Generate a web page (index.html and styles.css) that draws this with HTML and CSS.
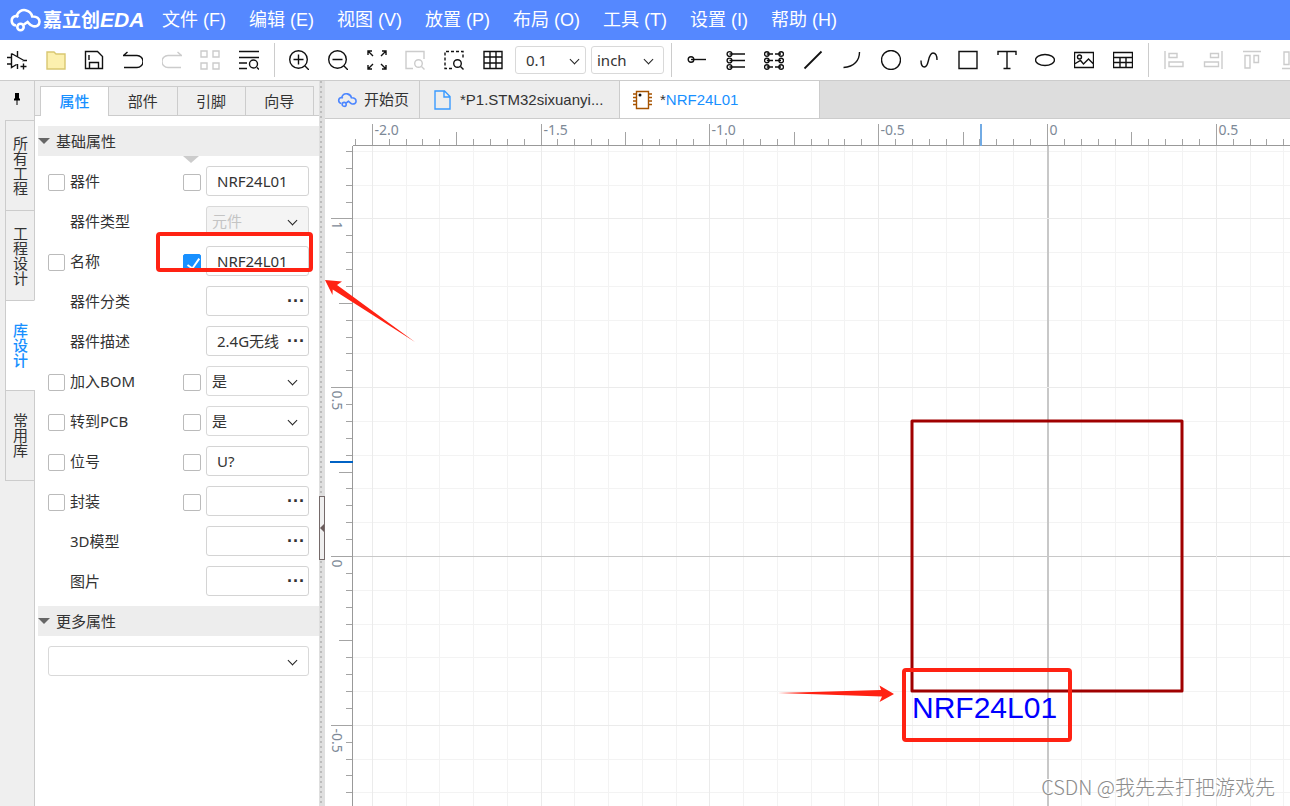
FILE: index.html
```html
<!DOCTYPE html>
<html lang="zh-CN">
<head>
<meta charset="utf-8">
<title>嘉立创EDA</title>
<link rel="stylesheet" href="styles.css">
</head>
<body>
<svg class="defs" aria-hidden="true">
  <symbol id="cloud" viewBox="0 0 32 24">
    <path d="M7 17.500a4.800 4.800 0 0 1-.3-9.500c1 0 2 .3 2.800.8M7.500 8C9 3.500 13 1.500 16.500 2.200c4 .8 6 3.300 6.700 6.300 4.500-.3 7.300 2 7.300 5.300 0 3.500-3 5-6.300 4.500-2.500-.4-4-2.500-5.700-4.300-1.500 1-2.500 1.800-3.700 2.800"/>
    <circle cx="11.500" cy="19" r="3.200"/>
  </symbol>
</svg>
<div class="app">
  <header class="menubar">
    <div class="logo">
      <svg class="logo-mark" viewBox="0 0 32 24"><use href="#cloud"/></svg>
      <span class="logo-cn">嘉立创</span><span class="logo-en">EDA</span>
    </div>
    <nav class="menus">
      <button class="menu">文件 (F)</button>
      <button class="menu">编辑 (E)</button>
      <button class="menu">视图 (V)</button>
      <button class="menu">放置 (P)</button>
      <button class="menu">布局 (O)</button>
      <button class="menu">工具 (T)</button>
      <button class="menu">设置 (I)</button>
      <button class="menu">帮助 (H)</button>
    </nav>
  </header>

  <div class="toolbar">
    <div class="tools tools-file">
      <button class="tool" aria-label="新建符号"><svg viewBox="0 0 20 20"><path d="M4.500 3.500v14l5-3M4.500 3.500L17 10.500M0 7.500h4.500M0 14h4.500M15 10.500h5M10.500 1v5.500M10.500 14v5M13.500 16.500h6M16.500 13.500v6"/></svg></button>
      <button class="tool" aria-label="打开"><svg viewBox="0 0 20 20"><path class="folder" d="M1 2h7l2 2h9v15H1z"/></svg></button>
      <button class="tool" aria-label="保存"><svg viewBox="0 0 20 20"><path d="M1.500 1.500h12l5 5v12h-17zM5.500 18.500v-6h9v6M5 5v5"/></svg></button>
      <button class="tool" aria-label="撤销"><svg viewBox="0 0 20 20"><path d="M4.500 2L.5 5.500H14a5.500 5.500 0 0 1 0 12H1"/></svg></button>
      <button class="tool off" aria-label="重做" disabled><svg viewBox="0 0 20 20"><path d="M15.500 2l4 3.500H6a5.500 5.500 0 0 0 0 12h13"/></svg></button>
      <button class="tool off" aria-label="阵列" disabled><svg viewBox="0 0 20 20"><path d="M1 1h6v6H1zM13 1h6v6h-6zM1 13h6v6H1zM13 13h6v6h-6z"/></svg></button>
      <button class="tool" aria-label="查找"><svg viewBox="0 0 20 20"><path d="M0 1.500h20M0 7.500h20M0 13h8M0 18.500h8M18 17.500l2 2"/><circle cx="14.500" cy="14" r="4"/></svg></button>
    </div>
    <div class="tools tools-view">
      <button class="tool" aria-label="放大"><svg viewBox="0 0 20 20"><circle cx="9.500" cy="9.500" r="8.800"/><path d="M4.500 9.500h10M9.500 4.500v10M16 16l4 4"/></svg></button>
      <button class="tool" aria-label="缩小"><svg viewBox="0 0 20 20"><circle cx="9.500" cy="9.500" r="8.800"/><path d="M4.500 9.500h10M16 16l4 4"/></svg></button>
      <button class="tool" aria-label="适应全部"><svg viewBox="0 0 20 20"><path d="M1 5V1h4M1 1l5 5M15 1h4v4M19 1l-5 5M1 15v4h4M1 19l5-5M19 15v4h-4M19 19l-5-5"/></svg></button>
      <button class="tool off" aria-label="适应选中" disabled><svg viewBox="0 0 20 20"><path d="M8 18.500H1v-17h18V9M16.500 16.500l3 3"/><circle cx="13.500" cy="13.500" r="3.800"/></svg></button>
      <button class="tool" aria-label="区域缩放"><svg viewBox="0 0 20 20"><path stroke-dasharray="3 2" d="M8 18.500H1v-17h18V9"/><path d="M16.500 16.500l3 3"/><circle cx="13.500" cy="13.500" r="3.800"/></svg></button>
      <button class="tool" aria-label="网格"><svg viewBox="0 0 20 20"><path d="M1 1.500h18v17H1zM1 7h18M1 13h18M7 1.500v17M13 1.500v17"/></svg></button>
    </div>
    <span class="select select-size"><select aria-label="网格尺寸"><option>0.1</option></select></span>
    <span class="select select-unit"><select aria-label="单位"><option>inch</option></select></span>
    <div class="tools tools-draw">
      <button class="tool" aria-label="单引脚"><svg viewBox="0 0 20 20"><circle cx="4" cy="9.500" r="2.800"/><path d="M4 9.500H19"/></svg></button>
      <button class="tool" aria-label="引脚组"><svg viewBox="0 0 20 20"><circle cx="3.500" cy="4" r="2.400"/><circle cx="3.500" cy="10.500" r="2.400"/><circle cx="3.500" cy="17" r="2.400"/><path d="M3.500 4H19M3.500 10.500H19M3.500 17H19"/></svg></button>
      <button class="tool" aria-label="双列引脚"><svg viewBox="0 0 20 20"><circle cx="2.800" cy="4" r="2.300"/><circle cx="2.800" cy="10.500" r="2.300"/><circle cx="2.800" cy="17" r="2.300"/><circle cx="17.200" cy="4" r="2.300"/><circle cx="17.200" cy="10.500" r="2.300"/><circle cx="17.200" cy="17" r="2.300"/><path d="M2.800 4H9M11 4h6M2.800 10.500H9M11 10.500h6M2.800 17H9M11 17h6"/></svg></button>
      <button class="tool" aria-label="直线"><svg viewBox="0 0 20 20"><path stroke-width="1.800" d="M1.500 18.500l17-17"/></svg></button>
      <button class="tool" aria-label="圆弧"><svg viewBox="0 0 20 20"><path d="M17.500 2c0 8-5 15-16 15.500"/></svg></button>
      <button class="tool" aria-label="圆"><svg viewBox="0 0 20 20"><circle cx="10" cy="10" r="9.500"/></svg></button>
      <button class="tool" aria-label="贝塞尔"><svg viewBox="0 0 20 20"><path d="M2 10.500c0 4 1 6.500 3.500 6.500 5 0 3-14 8.500-14 2.500 0 4 3 4 7"/></svg></button>
      <button class="tool" aria-label="矩形"><svg viewBox="0 0 20 20"><path d="M1 1.500h18v17H1z"/></svg></button>
      <button class="tool" aria-label="文本"><svg viewBox="0 0 20 20"><path d="M1 5V1.500h18V5M10 1.500v17M6.500 18.500h7"/></svg></button>
      <button class="tool" aria-label="椭圆"><svg viewBox="0 0 20 20"><ellipse cx="10" cy="10" rx="9.500" ry="5.500"/></svg></button>
      <button class="tool" aria-label="图片"><svg viewBox="0 0 20 20"><path d="M.5 2.500h19v15H.5zM.5 14l6-3.500 3 3.500 5-5 5 5"/><circle cx="5.500" cy="7" r="2"/></svg></button>
      <button class="tool" aria-label="表格"><svg viewBox="0 0 20 20"><path d="M.5 2.500h19v15H.5zM.5 7.500h19M.5 12.500h19M7 7.500v10M13 7.500v10"/></svg></button>
    </div>
    <div class="tools tools-align">
      <button class="tool off" aria-label="左对齐" disabled><svg viewBox="0 0 20 20"><path d="M1 1v18M5 3.500h8v4H5zM5 12h14v4.500H5z"/></svg></button>
      <button class="tool off" aria-label="右对齐" disabled><svg viewBox="0 0 20 20"><path d="M19 1v18M7.500 3.500h8v4h-8zM1.500 12h14v4.500h-14z"/></svg></button>
      <button class="tool off" aria-label="顶对齐" disabled><svg viewBox="0 0 20 20"><path d="M1 1.500h18M3 5.500h5V18H3zM12 5.500h4.500v7H12z"/></svg></button>
      <button class="tool off" aria-label="底对齐" disabled><svg viewBox="0 0 20 20"><path d="M1 18.500h18M3 2h5v12.500H3zM12 7h4.500v7.500H12z"/></svg></button>
    </div>
  </div>

  <div class="body">
    <aside class="rail">
      <button class="pin" aria-label="固定"><svg viewBox="0 0 8 12"><path d="M2 0h4v5l1 1v1.500H4.500V12h-1V7.500H1V6l1-1z"/></svg></button>
      <button class="rail-tab">所有工程</button>
      <button class="rail-tab">工程设计</button>
      <button class="rail-tab active">库设计</button>
      <button class="rail-tab">常用库</button>
    </aside>

    <section class="panel">
      <div class="panel-tabs">
        <button class="panel-tab active">属性</button>
        <button class="panel-tab">部件</button>
        <button class="panel-tab">引脚</button>
        <button class="panel-tab">向导</button>
      </div>
      <h2 class="section">基础属性</h2>
      <div class="rows">
        <div class="row"><input class="check c1" type="checkbox" id="k1"><label class="name" for="k1">器件</label><input class="check c3" type="checkbox" aria-label="显示器件"><input class="field" aria-label="器件" value="NRF24L01"></div>
        <div class="row"><label class="name" for="f2">器件类型</label><span class="select field-select"><select id="f2" disabled><option>元件</option></select></span></div>
        <div class="row"><input class="check c1" type="checkbox" id="k3"><label class="name" for="k3">名称</label><input class="check c3" type="checkbox" aria-label="显示名称" checked><input class="field" aria-label="名称" value="NRF24L01"></div>
        <div class="row"><label class="name" for="f4">器件分类</label><span class="field combo"><input id="f4"><button class="more" aria-label="选择分类">···</button></span></div>
        <div class="row"><label class="name" for="f5">器件描述</label><span class="field combo"><input id="f5" value="2.4G无线"><button class="more" aria-label="编辑描述">···</button></span></div>
        <div class="row"><input class="check c1" type="checkbox" id="k6"><label class="name" for="k6">加入BOM</label><input class="check c3" type="checkbox" aria-label="显示加入BOM"><span class="select field-select"><select aria-label="加入BOM"><option>是</option></select></span></div>
        <div class="row"><input class="check c1" type="checkbox" id="k7"><label class="name" for="k7">转到PCB</label><input class="check c3" type="checkbox" aria-label="显示转到PCB"><span class="select field-select"><select aria-label="转到PCB"><option>是</option></select></span></div>
        <div class="row"><input class="check c1" type="checkbox" id="k8"><label class="name" for="k8">位号</label><input class="check c3" type="checkbox" aria-label="显示位号"><input class="field" aria-label="位号" value="U?"></div>
        <div class="row"><input class="check c1" type="checkbox" id="k9"><label class="name" for="k9">封装</label><input class="check c3" type="checkbox" aria-label="显示封装"><span class="field combo"><input aria-label="封装"><button class="more" aria-label="选择封装">···</button></span></div>
        <div class="row"><label class="name" for="f10">3D模型</label><span class="field combo"><input id="f10"><button class="more" aria-label="选择3D模型">···</button></span></div>
        <div class="row"><label class="name" for="f11">图片</label><span class="field combo"><input id="f11"><button class="more" aria-label="选择图片">···</button></span></div>
        <div class="mark"></div>
      </div>
      <h2 class="section">更多属性</h2>
      <div class="extra"><span class="select"><select aria-label="更多属性"><option></option></select></span></div>
    </section>

    <div class="splitter"><button class="handle" aria-label="收起面板"></button></div>

    <main class="main">
      <div class="doc-tabs">
        <button class="doc-tab home"><svg class="tab-cloud" viewBox="0 0 32 24"><use href="#cloud"/></svg><span>开始页</span></button>
        <button class="doc-tab file"><svg class="tab-page" viewBox="0 0 17 20"><path d="M1 1h9.500L16 6.500V19H1zM10 1v6h6"/></svg><span>*P1.STM32sixuanyi...</span></button>
        <button class="doc-tab file active"><svg class="tab-chip" viewBox="0 0 22 20"><path d="M4.500 1.500h12v17h-12zM1 4h3.500M1 7.500h3.500M1 11h3.500M1 14.500h3.500M16.500 4H20M16.500 7.500H20M16.500 11H20M16.500 14.500H20"/><circle cx="8" cy="5" r="1.500"/></svg><span>*<span class="doc-name">NRF24L01</span></span></button>
      </div>
      <div class="sheet">
        <svg class="canvas" id="canvas">
          <g id="grid"></g>
          <g id="ruler"></g>
          <path class="cursor-x" d="M656 5v22"/>
          <path class="cursor-y" d="M5 343h23"/>
          <g transform="translate(723 437)">
            <rect class="body-rect" x="-136" y="-135" width="270" height="270"/>
            <text class="part-name" x="-136" y="162">NRF24L01</text>
          </g>
          <rect class="note" x="579" y="551" width="166" height="70" rx="2"/>
          <path class="arrow" d="M453 574L556 571 554.500 566.500 569 575 554.500 583 557 577.500z"/>
          <path class="arrow" d="M0 161L17 162.500 12 166 90 223 7.700 170.500 7.500 176z"/>
        </svg>
        <div class="watermark">CSDN @我先去打把游戏先</div>
      </div>
    </main>
  </div>
</div>
<script src="canvas.js"></script>
</body>
</html>
```

FILE: styles.css
```css
* { box-sizing: border-box; }
body { margin: 0; background: #fff; color: #333; font: 15px/20px "Noto Sans", "Noto Sans CJK SC", sans-serif; }
button, input, select { font: inherit; color: inherit; margin: 0; padding: 0; border: 0; background: none; }
.defs { display: none; }
.app { display: flex; flex-direction: column; height: 100vh; overflow: hidden; }

.menubar { display: flex; align-items: center; flex: none; height: 40px; padding-left: 9px; background: #5588ff; color: #fff; }
.logo { display: flex; align-items: center; width: 153px; font-weight: 700; }
.logo-mark { width: 32px; height: 24px; margin-right: 2px; fill: none; stroke: #fff; stroke-width: 2.6; }
.logo-cn { font-size: 19px; }
.logo-en { font: italic 700 21px/24px "Liberation Sans", sans-serif; }
.menus { display: flex; gap: 23px; padding-bottom: 1px; }
.menu { font: 18px/24px "Liberation Sans", "Noto Sans CJK SC", sans-serif; white-space: nowrap; }

.toolbar { display: flex; align-items: center; flex: none; height: 41px; padding-left: 7px; border-bottom: 1px solid #ccc; overflow: hidden; }
.tools { display: flex; align-items: center; justify-content: space-between; flex: none; }
.tool { width: 20px; height: 20px; flex: none; }
.tool svg { display: block; width: 20px; height: 20px; fill: none; stroke: #111; stroke-width: 1.4; }
.tool.off svg { stroke: #ccc; }
.tool .folder { fill: #fcf0ae; stroke: #d9c771; }
.tools-file { width: 252px; }
.tools-view { width: 229px; height: 34px; margin: 0 12px 0 15px; padding-left: 14px; border-left: 1px solid #ccc; }
.tools-draw { width: 462px; height: 34px; margin-left: 7px; padding-left: 15px; border-left: 1px solid #ccc; }
.tools-align { height: 34px; gap: 19px; margin-left: 15px; padding-left: 15px; border-left: 1px solid #ccc; }

.select { position: relative; display: block; flex: none; }
.select select { display: block; width: 100%; height: 30px; padding: 0 5px; border: 1px solid #d9d9d9; border-radius: 3px; background: #fff; appearance: none; }
.select select:disabled { background: #f4f4f4; color: #c4c4c4; opacity: 1; }
.select::after { content: ""; position: absolute; right: 13px; top: 11px; width: 6px; height: 6px; border: solid #222; border-width: 0 1px 1px 0; transform: rotate(45deg); }
.select-size { width: 71px; margin-right: 5px; }
.select-unit { width: 73px; }
.select-size select, .select-unit select { height: 28px; }
.select-size select { padding-left: 10px; }
.select-size::after, .select-unit::after { top: 10px; }
.select-size::after { right: 8px; }
.select-unit::after { right: 12px; }

.body { display: flex; flex: 1; min-height: 0; }
.rail { display: flex; flex-direction: column; flex: none; width: 35px; padding-left: 5px; background: #efefef; border-right: 1px solid #ccc; }
.pin { display: flex; justify-content: center; width: 23px; height: 39px; padding-top: 12px; }
.pin svg { width: 8px; height: 12px; }
.rail-tab { display: flex; align-items: center; justify-content: center; height: 90px; margin-right: -1px; border: solid #ccc; border-width: 1px 1px 0; font: 15px/20px "Noto Sans CJK SC", sans-serif; writing-mode: vertical-rl; }
.rail-tab:last-child { height: 91px; border-bottom-width: 1px; }
.rail-tab.active { background: #fff; border-right-color: #fff; color: #1890ff; font-weight: 500; }

.panel { flex: none; width: 284px; }
.panel-tabs { display: flex; height: 35px; padding: 5px 5px 0; background: #efefef; border-bottom: 1px solid #ccc; }
.panel-tab { flex: 1; height: 29px; border: solid #ccc; border-width: 1px 1px 0 0; }
.panel-tab.active { height: 30px; padding-bottom: 2px; border-left-width: 1px; background: #fff; color: #1890ff; font-weight: 500; }
.section { display: flex; align-items: center; gap: 6px; height: 30px; margin: 10px 0 0 3px; padding-bottom: 1px; background: #ededed; font-size: 15px; font-weight: 400; }
.section::before { content: ""; border: solid transparent; border-width: 6px 6px 0; border-top-color: #666; }
.rows { position: relative; padding: 5px 10px 5px 13px; }
.rows::before { content: ""; position: absolute; left: 148px; top: 0; border: solid transparent; border-width: 7px 8px 0; border-top-color: #ccc; }
.rows + .section { margin-top: 0; }
.row { display: grid; grid-template-columns: 22px 113px 23px 1fr; align-items: center; height: 40px; }
.check { width: 17px; height: 17px; margin-top: 2px; border: 1px solid #bbb; border-radius: 2px; background: #fff; appearance: none; }
.c1 { grid-column: 1; }
.c3 { grid-column: 3; width: 18px; }
.check:checked { position: relative; background: #1890ff; border-color: #1890ff; }
.check:checked::after { content: ""; position: absolute; left: 6px; top: 1px; width: 5px; height: 11px; border: solid #fff; border-width: 0 2px 2px 0; transform: rotate(35deg); }
.name { grid-column: 2; }
.field { grid-column: 4; width: 100%; min-width: 0; height: 30px; padding: 0 0 0 10px; border: 1px solid #d4d4d4; border-radius: 3px; background: #fff; }
.field-select { grid-column: 4; }
.combo { display: flex; }
.combo input { flex: 1; min-width: 0; }
.more { flex: none; width: 24px; font: 700 18px/20px "Liberation Sans", sans-serif; }
.mark { position: absolute; left: 121px; top: 76px; width: 157px; height: 40px; border: 4px solid #ff2213; border-radius: 4px; }
.extra { padding: 10px 10px 0 13px; }

.splitter { display: flex; align-items: center; flex: none; width: 6px; background: repeating-linear-gradient(#bdbdbd 0 2px, transparent 2px 5px) 1px 0 / 2px 100% no-repeat #dfdfdf; }
.handle { display: flex; align-items: center; justify-content: flex-end; width: 6px; height: 64px; margin-top: 168px; border: 1px solid #756a6a; background: #efefef; }
.handle::before { content: ""; border: solid transparent; border-width: 4px 4px 4px 0; border-right-color: #6a5c5c; }

.main { display: flex; flex-direction: column; flex: 1; min-width: 0; }
.doc-tabs { display: flex; flex: none; height: 38px; background: #ddd; border-bottom: 1px solid #ccc; }
.doc-tab { display: flex; align-items: center; padding-left: 12px; border-right: 1px solid #ccc; background: #ededed; font-family: "Liberation Sans", "Noto Sans CJK SC", sans-serif; white-space: nowrap; }
.home { width: 95px; }
.file { width: 200px; }
.doc-tab.active { background: #fff; }
.doc-name { color: #1890ff; }
.doc-tab svg { flex: none; fill: none; }
.tab-cloud { width: 20px; height: 16px; margin-right: 7px; stroke: #4c86ff; stroke-width: 2.6; }
.tab-page { width: 17px; height: 20px; margin: 0 9px 0 2px; stroke: #3a9bff; stroke-width: 1.4; }
.tab-chip { width: 22px; height: 20px; margin-right: 6px; stroke: #a65300; stroke-width: 1.4; }
.tab-chip circle { fill: #111; stroke: none; }

.sheet { position: relative; flex: 1; min-height: 0; }
.canvas { display: block; width: 100%; height: 100%; }
.grid-minor { stroke: #f3f3f3; shape-rendering: crispEdges; }
.grid-major { stroke: #ebebeb; shape-rendering: crispEdges; }
.axis { stroke: #c8c8c8; shape-rendering: crispEdges; }
.tick { stroke: #a4a4a4; shape-rendering: crispEdges; }
.edge { stroke: #999; shape-rendering: crispEdges; }
.scale { fill: #7d8997; font: 14px "Noto Sans", sans-serif; }
.cursor-x { stroke: #72abe4; stroke-width: 2; }
.cursor-y { stroke: #0062c4; stroke-width: 2; }
.body-rect { fill: none; stroke: #a00000; stroke-width: 3; stroke-linejoin: round; }
.part-name { fill: #0000ff; font: 30px "Liberation Sans", sans-serif; }
.note { fill: none; stroke: #ff2213; stroke-width: 4; }
.arrow { fill: #ff2213; }
.watermark { position: absolute; right: 15px; bottom: 4px; color: #8c8c8c; font: 300 20px/30px "Noto Sans CJK SC", sans-serif; text-shadow: -1px -1px 0 #fff; white-space: nowrap; }
```

FILE: canvas.js
```js
// Draws the grid and the two rulers for the current size of the sheet.
const canvas = document.getElementById('canvas');
const grid = document.getElementById('grid');
const ruler = document.getElementById('ruler');
const ORIGIN = { x: 722, y: 437 };
const UNIT = 337.6;
const EDGE = { x: 28, y: 27 };

function add(parent, tag, attrs, text) {
  const el = document.createElementNS('http://www.w3.org/2000/svg', tag);
  for (const key in attrs) el.setAttribute(key, attrs[key]);
  if (text) el.textContent = text;
  parent.appendChild(el);
}

function label(n) {
  return n === 0 ? '0' : (n / 20).toFixed(1);
}

function draw() {
  const w = canvas.clientWidth;
  const h = canvas.clientHeight;
  grid.replaceChildren();
  ruler.replaceChildren();
  const step = UNIT / 20;

  for (const major of [false, true]) {
    for (let n = -60; n <= 60; n += 2) {
      if ((n % 10 === 0) !== major) continue;
      const cls = n === 0 ? 'axis' : major ? 'grid-major' : 'grid-minor';
      const x = Math.round(ORIGIN.x + n * step) + 0.5;
      const y = Math.round(ORIGIN.y - n * step) + 0.5;
      if (x > EDGE.x && x < w) add(grid, 'path', { class: cls, d: `M${x} ${EDGE.y}V${h}`, 'stroke-width': n === 0 ? 2 : 1 });
      if (y > EDGE.y && y < h) add(grid, 'path', { class: cls, d: `M${EDGE.x} ${y}H${w}` });
    }
  }

  for (let n = -60; n <= 60; n++) {
    const x = Math.round(ORIGIN.x + n * step) + 0.5;
    const y = Math.round(ORIGIN.y - n * step) + 0.5;
    const size = n % 10 === 0 ? 22 : n % 5 === 0 ? 14 : 7;
    if (x > EDGE.x && x < w) {
      add(ruler, 'path', { class: 'tick', d: `M${x} ${EDGE.y}v${-size}` });
      if (n % 10 === 0) add(ruler, 'text', { class: 'scale', x: x + 2, y: 16 }, label(n));
    }
    if (y > EDGE.y && y < h) {
      add(ruler, 'path', { class: 'tick', d: `M${EDGE.x} ${y}h${-size}` });
      if (n % 10 === 0) add(ruler, 'text', { class: 'scale', transform: `translate(7 ${y + 3}) rotate(90)` }, n === 20 ? '1' : label(n));
    }
  }
  add(ruler, 'path', { class: 'edge', d: `M${EDGE.x} ${EDGE.y - 0.5}H${w}M${EDGE.x - 0.5} ${EDGE.y}V${h}` });
}

draw();
window.addEventListener('resize', draw);
```
